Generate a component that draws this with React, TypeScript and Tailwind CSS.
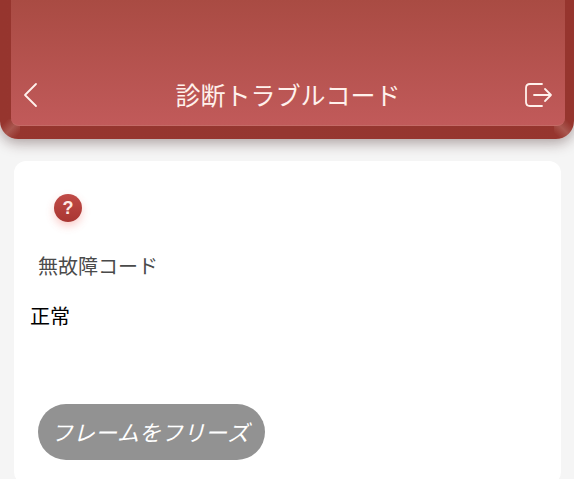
import React, { useState } from "react";

const Header: React.FC = () => {
  return (
    <header className="relative z-10 rounded-b-[18px] bg-linear-to-r from-[#96352e] via-[#963731] to-[#96352e] pr-[9px] pb-[13px] pl-[11px] shadow-[0_4px_14px_rgba(60,30,30,0.4)]">
      {/* light on the bevelled corners */}
      <span className="absolute bottom-0 left-0 h-5 w-5 rounded-bl-[18px] bg-[linear-gradient(135deg,transparent_20%,rgba(205,150,140,0.35)_52%,transparent_85%)]" />
      <span className="absolute right-0 bottom-0 h-5 w-5 rounded-br-[18px] bg-[linear-gradient(225deg,transparent_20%,rgba(205,150,140,0.35)_52%,transparent_85%)]" />

      <div className="relative flex items-center rounded-b-lg border-b border-[#c56a66] bg-linear-to-b from-[#a94b43] to-[#c15a5a] pt-[76px] pr-3 pb-3 pl-3 text-[#fff1ec]">
        <button type="button" aria-label="戻る" className="h-[37px] w-7">
          <svg
            viewBox="0 0 28 28"
            className="h-7 w-7"
            fill="none"
            stroke="currentColor"
            strokeWidth="1.8"
            strokeLinecap="round"
            strokeLinejoin="round">
            <path d="M13 3 L2 14 L13 25" />
          </svg>
        </button>
        <h1 className="flex-1 text-center text-[25px] leading-[37px]">
          診断トラブルコード
        </h1>
        <button type="button" aria-label="終了" className="h-[37px] w-7">
          <svg
            viewBox="0 0 28 28"
            className="h-7 w-7"
            fill="none"
            stroke="currentColor"
            strokeWidth="1.8"
            strokeLinecap="round"
            strokeLinejoin="round">
            <path d="M17 3 H5 Q1 3 1 7 V21 Q1 25 5 25 H17" />
            <path d="M9 14 H26 M20 8 L26 14 L20 20" />
          </svg>
        </button>
      </div>
    </header>
  );
};

const App: React.FC = () => {
  const [frozen, setFrozen] = useState(false);

  return (
    <div className="h-screen overflow-hidden bg-[#f5f5f5] font-['Noto_Sans_CJK_JP',sans-serif] [font-kerning:none]">
      <Header />

      <main className="mt-[22px] mr-[13px] ml-[14px] flex flex-col items-start rounded-xl bg-white px-6 pt-[33px] pb-6">
        <span className="ml-4 flex h-7 w-7 items-center justify-center rounded-full bg-linear-to-b from-[#c04a46] to-[#a93632] font-['Liberation_Sans',sans-serif] text-lg font-bold text-[#ffe9e4] shadow-[0_4px_8px_rgba(240,90,80,0.3)]">
          ?
        </span>

        <h2 className="mt-[29px] text-[20px] leading-[30px] text-[#4a4a4a]">
          無故障コード
        </h2>
        <p className="-ml-2 mt-5 text-[20px] leading-[30px] text-black">
          正常
        </p>

        <button
          type="button"
          aria-pressed={frozen}
          onClick={() => setFrozen(!frozen)}
          className="mt-[73px] h-14 rounded-full bg-[#929292] pr-4 pb-[2px] pl-[13px] text-[22px] text-white italic">
          フレームをフリーズ
        </button>
      </main>
    </div>
  );
};

export default App;
